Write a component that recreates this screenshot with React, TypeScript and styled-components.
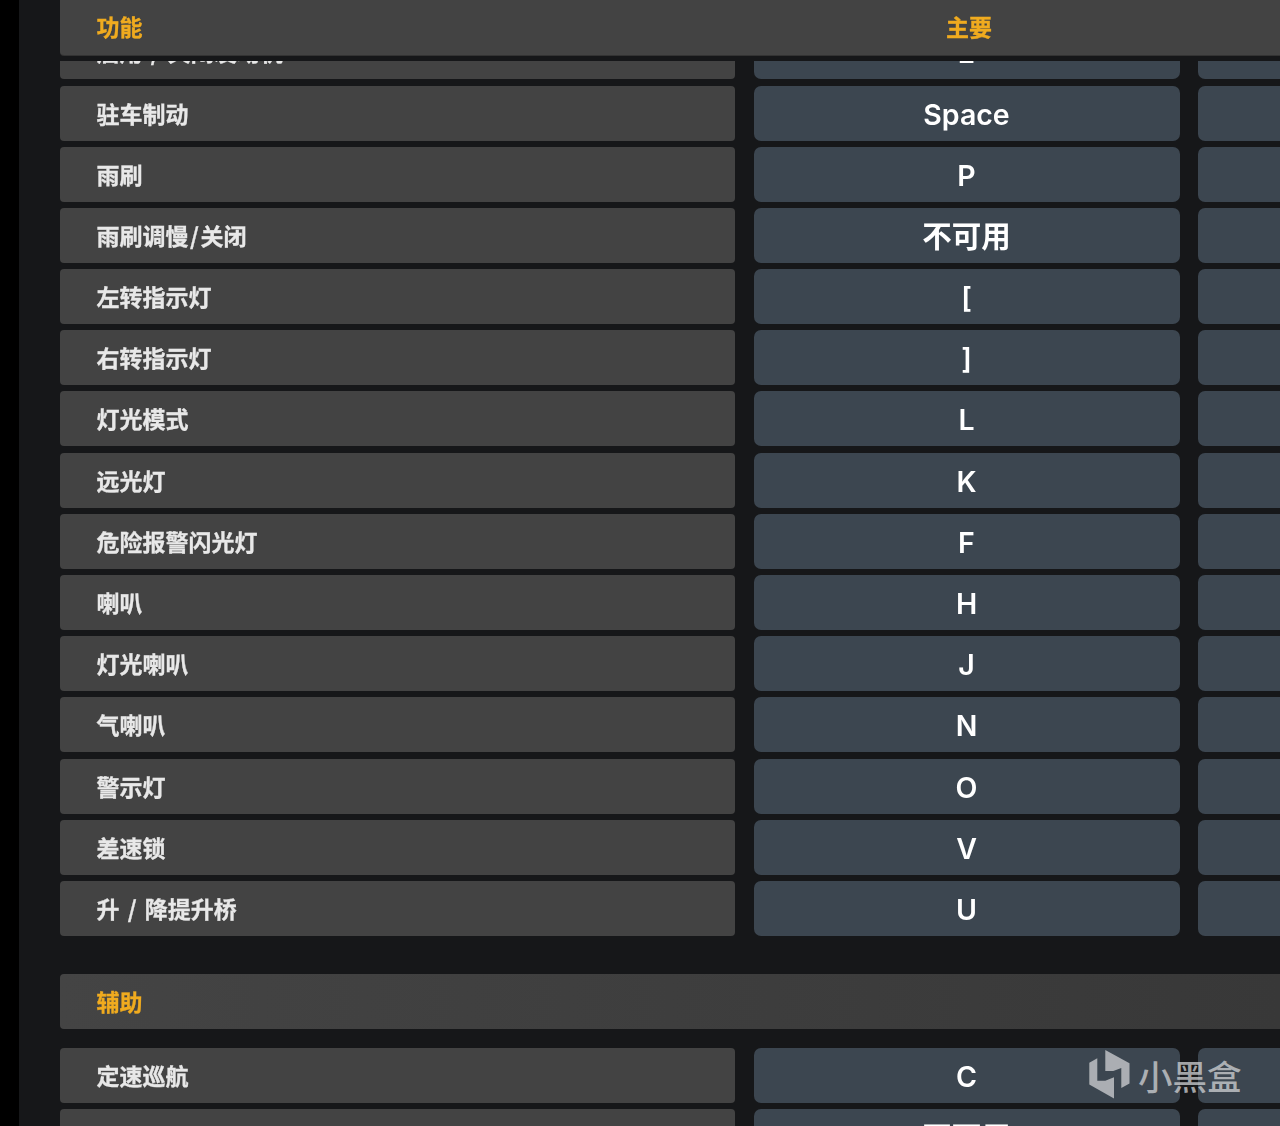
import React from "react";
import styled, { createGlobalStyle } from "styled-components";

const GlobalStyle = createGlobalStyle`
  html, body {
    margin: 0;
    padding: 0;
    background: #000;
  }
`;

const fontStack = `Inter, "Noto Sans CJK SC", sans-serif`;
const labelStack = `"Noto Sans CJK SC", sans-serif`;

const Page = styled.div`
  position: relative;
  width: 1280px;
  height: 1126px;
  padding-left: 19px;
  box-sizing: border-box;
  background: #000;
  overflow: hidden;
`;

const Sheet = styled.div`
  height: 100%;
  padding-left: 41px;
  background: #161719;
  overflow: hidden;
  filter: blur(0.45px);
`;

const HeaderRow = styled.div`
  display: grid;
  grid-template-columns: 694px 426px 1fr;
  align-items: center;
  height: 55px;
  background: #434343;
  border-radius: 0 0 0 4px;
  box-shadow: 0 1px 0 #333;
`;

const HeaderLabel = styled.div<{ $center?: boolean }>`
  padding-left: ${(p) => (p.$center ? "4px" : "36.5px")};
  padding-bottom: 3px;
  text-align: ${(p) => (p.$center ? "center" : "left")};
  font: 700 23px/52px ${labelStack};
  color: #f0ab1f;
  -webkit-text-stroke: 0.3px #f0ab1f;
`;

const ScrollClip = styled.div`
  margin-top: 6px;
  height: 1065px;
  overflow: hidden;
`;

const RowList = styled.div`
  display: flex;
  flex-direction: column;
  gap: 6.2px;
  margin-top: -36.7px;
`;

const Row = styled.div`
  display: grid;
  grid-template-columns: 675px 426px 120px;
  grid-template-rows: 55px;
  column-gap: 18.5px;
  height: 55px;
`;

const Label = styled.div`
  padding-left: 36.5px;
  background: #434343;
  border-radius: 4px;
  font: 700 23px/55px ${labelStack};
  color: #e8e8e8;
  -webkit-text-stroke: 0.3px #e8e8e8;
  white-space: pre;
`;

const Slash = styled.span<{ $wide?: boolean }>`
  margin: 0 ${(p) => (p.$wide ? "3px" : "1.5px")};
`;

const Key = styled.div<{ $cjk?: boolean }>`
  background: #3c4650;
  border-radius: 7px;
  text-align: center;
  font: ${(p) => (p.$cjk ? "700 29.5px/57px" : "600 28.5px/58px")} ${fontStack};
  color: #ffffff;
  white-space: nowrap;
`;

const Alt = styled.div`
  background: #3c4650;
  border-radius: 7px 0 0 7px;
`;

const SectionHeader = styled.div`
  height: 55px;
  margin-top: 31.8px;
  margin-bottom: 12.8px;
  padding-left: 36.5px;
  background: linear-gradient(90deg, #444444 0%, #383838 100%);
  border-radius: 4px 0 0 4px;
  font: 700 23px/55px ${labelStack};
  color: #f0ab1f;
  -webkit-text-stroke: 0.3px #f0ab1f;
`;

const Watermark = styled.div`
  position: absolute;
  left: 1089px;
  top: 1050px;
  display: flex;
  align-items: center;
  gap: 8px;
  color: rgba(208, 210, 212, 0.75);
  font: 500 34.5px/48px ${labelStack};
`;

const upperRows: [string, string][] = [
  ["启用 / 关闭发动机", "E"],
  ["驻车制动", "Space"],
  ["雨刷", "P"],
  ["雨刷调慢/关闭", "不可用"],
  ["左转指示灯", "["],
  ["右转指示灯", "]"],
  ["灯光模式", "L"],
  ["远光灯", "K"],
  ["危险报警闪光灯", "F"],
  ["喇叭", "H"],
  ["灯光喇叭", "J"],
  ["气喇叭", "N"],
  ["警示灯", "O"],
  ["差速锁", "V"],
  ["升 / 降提升桥", "U"],
];

const lowerRows: [string, string][] = [
  ["定速巡航", "C"],
  ["", "不可用"],
];

// the source font has a much wider slash than Noto
function LabelText({ name }: { name: string }) {
  const parts = name.split("/");
  if (parts.length < 2) return <>{name}</>;
  return (
    <>
      {parts[0]}
      <Slash $wide={parts[0].endsWith(" ")}>/</Slash>
      {parts[1]}
    </>
  );
}

function KeyRow({ name, binding }: { name: string; binding: string }) {
  return (
    <Row>
      <Label>
        <LabelText name={name} />
      </Label>
      <Key $cjk={binding === "不可用"}>{binding}</Key>
      <Alt />
    </Row>
  );
}

function Logo() {
  return (
    <svg width="41" height="49" viewBox="0 0 41 49" fill="currentColor">
      <path d="M16.3 0 L40.5 13.3 V33.5 L32.3 38 V18 L24.3 21 H16.3 Z" />
      <path d="M0.3 12.7 L8.3 8.3 V30.7 H16.3 L25 27.3 V48.6 L0.3 34.6 Z" />
    </svg>
  );
}

export default function App() {
  return (
    <>
      <GlobalStyle />
      <Page>
        <Sheet>
          <HeaderRow>
            <HeaderLabel>功能</HeaderLabel>
            <HeaderLabel $center>主要</HeaderLabel>
          </HeaderRow>
          <ScrollClip>
            <RowList>
              {upperRows.map(([name, binding]) => (
                <KeyRow key={name} name={name} binding={binding} />
              ))}
              <SectionHeader>辅助</SectionHeader>
              {lowerRows.map(([name, binding]) => (
                <KeyRow key={binding} name={name} binding={binding} />
              ))}
            </RowList>
          </ScrollClip>
        </Sheet>
        <Watermark>
          <Logo />
          <span>小黑盒</span>
        </Watermark>
      </Page>
    </>
  );
}
